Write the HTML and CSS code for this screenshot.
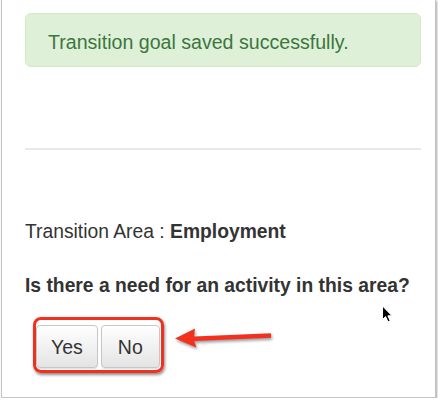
FILE: index.html
```html
<!DOCTYPE html>
<html>
<head>
<meta charset="utf-8">
<link rel="stylesheet" href="styles.css">
</head>
<body>
<div class="window">
  <div class="alert">Transition goal saved successfully.</div>
  <hr class="rule">
  <p class="area">Transition Area : <strong>Employment</strong></p>
  <p class="question">Is there a need for an activity in this area?</p>
  <div class="highlight">
    <button class="btn">Yes</button>
    <button class="btn">No</button>
  </div>
  <svg class="arrow" width="110" height="30" viewBox="0 0 110 30">
    <polygon points="1,15.5 21,5.5 20,13.5 97,10.3 97,14.8 20,18 22.5,24.5" fill="#f2301d"/>
  </svg>
  <svg class="cursor" width="14" height="20" viewBox="0 0 14 20">
    <path d="M1.5 1 L1.5 14.5 L4.6 11.6 L7 16.8 L9.2 15.8 L6.9 10.8 L11 10.8 Z" fill="#000" stroke="#fff" stroke-width="1" stroke-linejoin="round"/>
  </svg>
</div>
</body>
</html>
```
FILE: styles.css
```css
html, body {
  margin: 0;
  padding: 0;
  background: #fff;
}

.window {
  position: relative;
  box-sizing: border-box;
  width: 435px;
  height: 398px;
  margin-left: 1px;
  padding: 13px 14px 0 23px;
  border: 1px solid #c4c4c4;
  border-top: none;
  box-shadow: 1px 1px 2px rgba(0, 0, 0, 0.35);
  font-family: "Liberation Sans", Arial, sans-serif;
  font-size: 19.3px;
  line-height: 27px;
  color: #333;
}

.alert {
  box-sizing: border-box;
  height: 54px;
  padding: 15px 20px 0 22px;
  background: #dff0d8;
  border: 1px solid #d6e9c6;
  border-radius: 6px;
  color: #3c763d;
  font-size: 19.6px;
}

.rule {
  margin: 81px 0 0;
  border: 0;
  border-top: 2px solid #e8e8e8;
  height: 0;
}

.area {
  margin: 68px 0 0;
}

.question {
  margin: 27px 0 0;
  font-weight: bold;
}

.highlight {
  display: inline-flex;
  gap: 3px;
  margin: 18px 0 0 8px;
  padding: 5px 1px 2px 0;
  border: 3px solid #f2301d;
  border-radius: 8px;
  box-shadow: 1px 2px 3px rgba(0, 0, 0, 0.45);
}

.btn {
  font-family: "Liberation Sans", Arial, sans-serif;
  font-size: 19.5px;
  line-height: 27px;
  color: #333;
  padding: 8px 14px 6px;
  background: linear-gradient(#ffffff, #e4e4e4);
  border: 1px solid #c6c6c6;
  border-radius: 4px;
  box-shadow: inset 0 1px 0 #fff, 0 1px 1px rgba(0, 0, 0, 0.12);
}

.btn + .btn {
  padding: 8px 16px 6px;
}

.arrow {
  position: absolute;
  left: 172px;
  top: 323px;
  filter: drop-shadow(1px 2px 1.5px rgba(0, 0, 0, 0.4));
}

.cursor {
  position: absolute;
  left: 379px;
  top: 305px;
}
```
